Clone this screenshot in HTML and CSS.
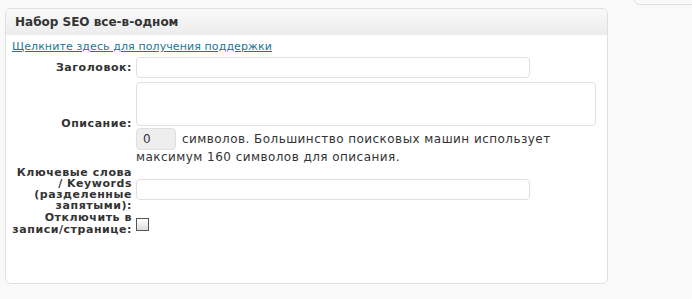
FILE: index.html
```html
<!DOCTYPE html>
<html lang="ru">
<head>
  <meta charset="UTF-8" />
  <title>Набор SEO все-в-одном</title>
  <link rel="stylesheet" href="styles.css">
</head>
<body>
  <div class="side-box"></div>
  <div class="wrap">
    <div class="postbox">
      <h3 class="hndle">Набор SEO все-в-одном</h3>
      <div class="inside">
        <a class="support" href="#">Щелкните здесь для получения поддержки</a>
        <div class="form-grid">
          <label class="lbl" for="seoTitle">Заголовок:</label>
          <div class="field"><input type="text" id="seoTitle" class="txt"></div>

          <label class="lbl" for="seoDesc">Описание:</label>
          <div class="field">
            <textarea id="seoDesc" class="area"></textarea>
            <div class="counter">
              <input type="text" class="count" value="0" readonly>
              <span>символов. Большинство поисковых машин использует</span>
            </div>
            <div class="counter-tail">максимум 160 символов для описания.</div>
          </div>

          <label class="lbl" for="seoKeys">Ключевые слова / Keywords (разделенные запятыми):</label>
          <div class="field"><input type="text" id="seoKeys" class="txt"></div>

          <label class="lbl lbl-check" for="seoOff">Отключить в <span class="nowrap">записи/странице:</span></label>
          <div class="field"><input type="checkbox" id="seoOff" class="chk"></div>
        </div>
      </div>
    </div>
  </div>
</body>
</html>
```

FILE: styles.css
```css
html, body {
  margin: 0;
  padding: 0;
  background: #f9f9f9;
  font-family: "DejaVu Sans", Verdana, sans-serif;
  color: #333;
}

.wrap {
  padding: 8px 0 0 5px;
  width: 603px;
}

/* кусок соседнего блока сверху справа */
.side-box {
  position: absolute;
  top: -10px;
  left: 634px;
  width: 80px;
  height: 13px;
  border: 1px solid #dfdfdf;
  border-bottom-left-radius: 6px;
  background: #f9f9f9;
}

.postbox {
  border: 1px solid #dfdfdf;
  border-radius: 6px;
  background: #fff;
  height: 276px;
  box-sizing: border-box;
  overflow: hidden;
}

.hndle {
  margin: 0;
  height: 26px;
  line-height: 26px;
  padding-left: 9px;
  font-size: 12px;
  font-weight: bold;
  color: #333;
  background: linear-gradient(to bottom, #f9f9f9, #ececec);
}

.inside {
  padding: 5px 0 0 6px;
}

.support {
  display: block;
  font-size: 11px;
  line-height: 14px;
  letter-spacing: 0.1px;
  color: #21759b;
  text-decoration: underline;
}

.form-grid {
  display: grid;
  grid-template-columns: 120px 1fr;
  column-gap: 4px;
  align-items: center;
  margin-top: 1px;
}

.lbl {
  padding: 1px 0;
  text-align: right;
  font-size: 11px;
  font-weight: bold;
  line-height: 11px;
  letter-spacing: 0.55px;
  color: #333;
}

.lbl-check {
  padding: 0;
  line-height: 12px;
}

.nowrap {
  white-space: nowrap;
}

.field {
  padding: 2px 0;
  font-size: 12px;
  letter-spacing: 0.45px;
}

.txt, .area, .count {
  display: block;
  box-sizing: border-box;
  border: 1px solid #dfdfdf;
  border-radius: 4px;
  background: #fff;
  font-family: inherit;
  font-size: 12px;
  margin: 0;
}

.txt {
  width: 394px;
  height: 21px;
}

.area {
  width: 460px;
  height: 44px;
  resize: none;
}

.counter {
  display: flex;
  align-items: center;
  gap: 6px;
  margin-top: 2px;
  color: #333;
}

.count {
  width: 40px;
  height: 22px;
  padding: 0 6px;
  background: #eee;
  color: #333;
}

.counter-tail {
  line-height: 14px;
  color: #333;
}

.chk {
  appearance: none;
  display: block;
  margin: 0;
  width: 13px;
  height: 13px;
  border: 1px solid #555;
  background: linear-gradient(to bottom, #fff, #ddd);
}
```
